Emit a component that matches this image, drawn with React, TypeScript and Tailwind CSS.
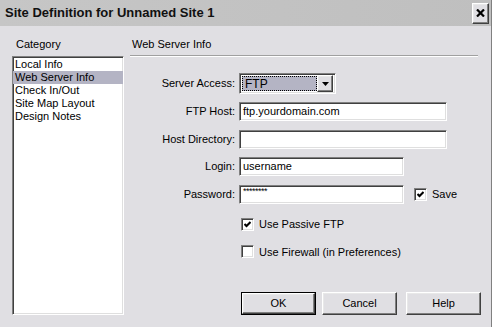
import React from 'react';

const raised =
  'border border-t-white border-l-white border-r-[#404040] border-b-[#404040] shadow-[inset_-1px_-1px_#808080,inset_1px_1px_#e8e8e8]';
const inset =
  'border border-t-[#808080] border-l-[#808080] border-r-white border-b-white shadow-[inset_1px_1px_#404040,inset_-1px_-1px_#dfdfdf]';

function Checkbox({ checked }: { checked?: boolean }) {
  return (
    <span className={`flex h-[13px] w-[13px] shrink-0 items-center justify-center bg-white ${inset}`}>
      {checked && (
        <svg width="7" height="7" viewBox="0 0 7 7">
          <polyline points="0.5,3 2.5,5 6.5,1" fill="none" stroke="black" strokeWidth="2" />
        </svg>
      )}
    </span>
  );
}

function TextField({ width, children }: { width: string; children?: React.ReactNode }) {
  return <div className={`flex h-[19px] items-center bg-white pl-[3px] ${width} ${inset}`}>{children}</div>;
}

function Row({ label, children, className }: { label: string; children: React.ReactNode; className?: string }) {
  return (
    <div className={`flex items-center ${className ?? ''}`}>
      <span className="w-[106px] shrink-0 pr-[1px] text-right">{label}</span>
      <div className="ml-[3px] flex items-center">{children}</div>
    </div>
  );
}

function Button({ label, isDefault }: { label: string; isDefault?: boolean }) {
  if (isDefault) {
    return (
      <div className="h-[23px] w-[75px] shrink-0 border border-black">
        <div className={`flex h-full w-full items-center justify-center bg-[#e0dfe3] ${raised}`}>{label}</div>
      </div>
    );
  }
  return (
    <div className={`flex h-[23px] w-[75px] shrink-0 items-center justify-center bg-[#e0dfe3] ${raised}`}>{label}</div>
  );
}

const categories = ['Local Info', 'Web Server Info', 'Check In/Out', 'Site Map Layout', 'Design Notes'];

export default function App() {
  return (
    <div className="flex h-[327px] w-[492px] flex-col border-r border-r-[#808080] bg-[#e0dfe3] font-['Liberation_Sans',Arial,sans-serif] text-[11px] text-black">
      {/* title bar */}
      <div className="flex h-[26px] shrink-0 items-center bg-gradient-to-r from-[#c6c6c6] to-[#bfbfbf] pl-[5px] pr-[2px]">
        <span className="text-[13px] font-bold text-[#111]">Site Definition for Unnamed Site 1</span>
        <div className={`ml-auto flex h-[21px] w-[17px] items-center justify-center bg-[#e0dfe3] ${raised}`}>
          <svg width="9" height="8" viewBox="0 0 9 8">
            <path d="M1 0.5 L8 7.5 M8 0.5 L1 7.5" stroke="black" strokeWidth="2.2" />
          </svg>
        </div>
      </div>

      {/* body */}
      <div className="flex min-h-0 flex-1 pb-[12px] pl-[12px] pr-[10px] pt-[12px]">
        <div className="flex w-[112px] shrink-0 flex-col">
          <span className="h-[13px] pl-[4px] leading-[13px]">Category</span>
          <div className={`mt-[5px] flex-1 bg-white pt-[1px] ${inset}`}>
            {categories.map((c) => (
              <div
                key={c}
                className={`h-[13px] pl-[2px] leading-[13px] ${c === 'Web Server Info' ? 'bg-[#b4b4c4]' : ''}`}
              >
                {c}
              </div>
            ))}
          </div>
        </div>

        <div className="ml-[6px] flex min-w-0 flex-1 flex-col">
          <span className="h-[13px] pl-[2px] leading-[13px]">Web Server Info</span>
          <div className="mr-[3px] mt-[4px] h-[2px] border-t border-b border-t-[#a0a0a0] border-b-white" />

          <Row label="Server Access:" className="mt-[16px]">
            <div className={`flex h-[21px] w-[97px] items-center bg-white pl-[2px] pr-[2px] ${inset}`}>
              <div className="flex h-[15px] w-[75px] items-center border border-dotted border-black bg-[#b4b4c4] pl-[2px] text-[12px]">
                FTP
              </div>
              <div className={`ml-auto flex h-[17px] w-[16px] items-center justify-center bg-[#e0dfe3] ${raised}`}>
                <svg width="7" height="4" viewBox="0 0 7 4">
                  <path d="M0 0 H7 L3.5 4 Z" fill="black" />
                </svg>
              </div>
            </div>
          </Row>
          <Row label="FTP Host:" className="mt-[8px]">
            <TextField width="w-[208px]">ftp.yourdomain.com</TextField>
          </Row>
          <Row label="Host Directory:" className="mt-[9px]">
            <TextField width="w-[208px]" />
          </Row>
          <Row label="Login:" className="mt-[8px]">
            <TextField width="w-[165px]">username</TextField>
          </Row>
          <Row label="Password:" className="mt-[9px]">
            <TextField width="w-[165px]">
              <span className="-mt-[5px] text-[9px] tracking-[-0.5px]">********</span>
            </TextField>
            <span className="ml-[10px]">
              <Checkbox checked />
            </span>
            <span className="ml-[5px]">Save</span>
          </Row>

          <div className="ml-[111px] mt-[12px] flex items-center">
            <Checkbox checked />
            <span className="ml-[5px]">Use Passive FTP</span>
          </div>
          <div className="ml-[111px] mt-[11px] flex items-center">
            <Checkbox />
            <span className="ml-[5px]">Use Firewall (in Preferences)</span>
          </div>

          <div className="ml-[111px] mt-auto flex">
            <Button label="OK" isDefault />
            <div className="ml-[6px]">
              <Button label="Cancel" />
            </div>
            <div className="ml-[9px]">
              <Button label="Help" />
            </div>
          </div>
        </div>
      </div>
    </div>
  );
}
